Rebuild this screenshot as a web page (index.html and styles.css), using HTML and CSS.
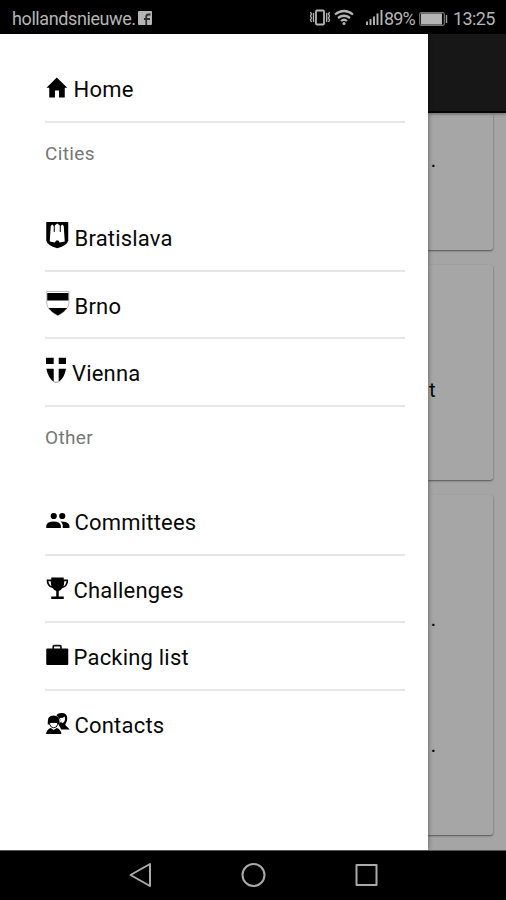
FILE: index.html
```html
<!DOCTYPE html>
<html lang="en">
<head>
<meta charset="utf-8">
<title>Menu</title>
<link rel="stylesheet" href="styles.css">
</head>
<body>
<div class="phone">
  <header class="status">
    <span class="carrier">hollandsnieuwe.</span>
    <svg class="fb" width="14" height="14" viewBox="0 0 14 14"><rect width="14" height="14" rx="1" fill="#b5b5b5"/><path d="M8.200 14V6q0-2.500 2.500-2.500h1.800M6 8h6" fill="none" stroke="#333" stroke-width="1.800"/></svg>
    <svg class="signals" width="75" height="20" viewBox="0 0 75 20" fill="none" stroke="#b5b5b5">
      <rect x="7" y="2.500" width="8" height="14" rx="1" stroke-width="1.800"/>
      <path d="M4.500 5v9M1.500 4l1 2-1 2 1 2-1 2 1 2M17.700 5v9M20.500 4l-1 2 1 2-1 2 1 2-1 2" stroke-width="1.300"/>
      <path d="M26 6.500q9-7 18 0M29 10q6-4.500 12 0M32 13q3-2.500 6 0" stroke-width="2.200"/><circle cx="35" cy="15.500" r="1.500" fill="#b5b5b5" stroke="none"/>
      <path d="M58 13.500V17M61.500 11V17M65 8.500V17M68.500 5.500V17M72.500 2V17" stroke-width="1.900"/>
    </svg>
    <span class="percent">89%</span>
    <svg class="battery" width="30" height="14" viewBox="0 0 30 14"><rect x=".7" y=".7" width="24.600" height="12.600" rx="1.500" fill="none" stroke="#777" stroke-width="1.200"/><rect x="2" y="1.500" width="21" height="11" fill="#b5b5b5"/><path d="M27.500 3v8" stroke="#999" stroke-width="1.500"/></svg>
    <time class="clock">13:25</time>
  </header>
  <div class="stage">
    <nav class="drawer">
      <a class="item"><svg class="icon" viewBox="0 0 28 30"><path d="M11.500 6.400 22 16.800h-2.500V26.500h-5.700V19.500H9.700v7H4V16.800H1.200Z"/></svg><span>Home</span></a>
      <h2 class="heading">Cities</h2>
      <a class="item"><svg class="icon wide" viewBox="0 0 29 30"><path d="M1 2H23V20.500Q22 25.500 12 28.200 2 25.500 1 20.500Z"/><path d="M5.500 6 7 4.500 8.500 6V12H9.500V5.500L12 3.500 14.500 5.500V12H15.500V6L17 4.500 18.500 6 19.500 21.500 14.500 22.500 13 20.500H11L9.500 22.500 4.500 21.500Z" fill="#fff"/></svg><span>Bratislava</span></a>
      <a class="item"><svg class="icon wide" viewBox="0 0 29 30"><path d="M1.500 3.500H23.700V16Q22 23 12.500 27.500 3 23 1.500 16Z" fill="#fff" stroke="#bbb"/><path d="M2 5H23.200V12.500H2ZM3.300 20H21.900Q18.500 24.700 12.600 27.500 6.700 24.700 3.300 20Z"/></svg><span>Brno</span></a>
      <a class="item"><svg class="icon narrow" viewBox="0 0 27 30"><path d="M1 2.800H8.700V9H1ZM13.700 2.800H21V9H13.700ZM1.300 13.800H8.700V26.800Q3.200 23 1.300 13.800ZM13.700 13.800H21Q19.500 23 13.700 26.800Z"/><path d="M8.700 26.800Q11 27.800 13.700 26.800" fill="none" stroke="#999"/></svg><span>Vienna</span></a>
      <h2 class="heading">Other</h2>
      <a class="item"><svg class="icon wide" viewBox="0 0 29 30"><circle cx="8.500" cy="12" r="3.100"/><circle cx="17" cy="12" r="3.100"/><path d="M1 24v-2.500Q2 17.500 8.300 17.500T15.600 21.500V24ZM17.500 24v-3Q17 18.500 15 17.600 23 17.300 24.200 21.500V24Z"/></svg><span>Committees</span></a>
      <a class="item"><svg class="icon" viewBox="0 0 28 30"><path d="M6 5.500H18.500V7.500H22.800V10Q22 15 17.200 16 15.500 18.600 13.500 19V24.500H18.500V27H6V24.500H11V19Q9 18.600 7.300 16 2.300 15 1.500 10V7.500H6Z"/><path d="M3.200 9.200H5.500q0 3 .8 5Q4 13 3.200 10ZM21.200 9.200H19q0 3-.8 5Q20.500 13 21.200 10Z" fill="#fff"/></svg><span>Challenges</span></a>
      <a class="item"><svg class="icon" viewBox="0 0 28 30"><rect x="1" y="9.500" width="22" height="16.500" rx="1"/><path d="M8 10V7.700q0-1 1-1h5.700q1 0 1 1V10" fill="none" stroke="#111" stroke-width="1.700"/></svg><span>Packing list</span></a>
      <a class="item"><svg class="icon wide" viewBox="0 0 29 30"><path d="M11.500 8q1-2 5-2 5.500 0 5.500 5.500 0 3-1.500 5L20 18l4.500 4.500H16L13.500 18 16 14 11 8Z"/><path d="M14.500 11q3.500 0 5-1.500l.3 3Q19 16 16.500 16" fill="#fff"/><path d="M2.500 15.500Q2 8.500 8.200 8.500t6.300 7v2h-12Z"/><path d="M4.500 15.500h7.900V17.500Q11.500 20.800 8.500 20.800T4.500 17.500Z" fill="#fff" stroke="#111"/><path d="M.8 27Q1.500 22.300 5.500 21l3 2 3-2q4 1.300 4.700 6Z"/></svg><span>Contacts</span></a>
    </nav>
    <main class="page">
      <div class="appbar"></div>
      <section class="card first"><p class="dot">.</p></section>
      <section class="card second"><p class="tail">t</p></section>
      <section class="card third"><p class="dot">.</p><p class="dot">.</p></section>
    </main>
  </div>
  <footer class="navbar">
    <svg viewBox="0 0 24 26"><path d="M21.500 2V24L2 13Z"/></svg>
    <svg viewBox="0 0 24 26"><circle cx="12" cy="13" r="11"/></svg>
    <svg viewBox="0 0 24 26"><rect x="2" y="3" width="20" height="20"/></svg>
  </footer>
</div>
</body>
</html>
```
FILE: styles.css
```css
* { box-sizing: border-box; }
body { margin: 0; font-family: Roboto, "Liberation Sans", sans-serif; }
.phone { display: grid; grid-template-rows: 34px 816px 50px; width: 506px; height: 900px; overflow: hidden; background: #000; }
.status { display: flex; align-items: center; padding: 3px 11px 0 12px; color: #b5b5b5; font-size: 18px; }
.carrier { width: 126px; font-size: 18px; letter-spacing: -.4px; }
.fb { margin-top: -1px; }
.signals { margin-left: auto; margin-top: -2px; }
.percent { width: 35px; letter-spacing: -.9px; }
.battery { margin-right: 4px; }
.clock { width: 42px; letter-spacing: -.6px; white-space: nowrap; }
.stage { display: grid; grid-template-columns: 428px 78px; overflow: hidden; }
.drawer { position: relative; z-index: 1; padding: 21.400px 23px 0 45px; background: #fff; box-shadow: 0 0 5px rgba(0,0,0,.45); }
.item { display: flex; height: 67.600px; padding-top: 16px; border-bottom: 2px solid #e6e6e6; color: #080808; font-size: 22px; letter-spacing: .2px; line-height: 38px; }
.item:last-child { border-bottom: 0; }
.icon { flex: none; width: 28.500px; height: 30px; }
.icon.wide { width: 29.500px; }
.icon.narrow { width: 27px; }
.heading { height: 81.200px; margin: 0; padding-top: 16px; color: #777; font-size: 19px; font-weight: 400; letter-spacing: .35px; line-height: 30px; }
.page { overflow: hidden; background: #a5a5a5; }
.appbar { position: relative; height: 79px; background: #171717; border-bottom: 2px solid #060606; box-shadow: 0 1px 3px rgba(0,0,0,.4); }
.card { width: 65px; margin-bottom: 15px; border-radius: 0 3px 3px 0; background: #a6a6a6; box-shadow: 0 1px 2px rgba(0,0,0,.5); }
.card p { margin: 0; color: #080808; font-size: 22px; line-height: 26px; }
.first { height: 137px; padding-top: 34px; }
.second { height: 215px; padding-top: 112px; }
.third { display: grid; align-content: start; gap: 100px; height: 340px; padding-top: 111px; }
.card .dot { padding-left: 2.500px; }
.card .tail { padding-left: 1px; font-size: 20px; }
.navbar { display: flex; justify-content: center; gap: 88px; padding-top: 11px; border-top: 1px solid #555; }
.navbar svg { width: 25px; height: 26px; fill: none; stroke: #aaa; stroke-width: 2; stroke-linejoin: round; }
```
